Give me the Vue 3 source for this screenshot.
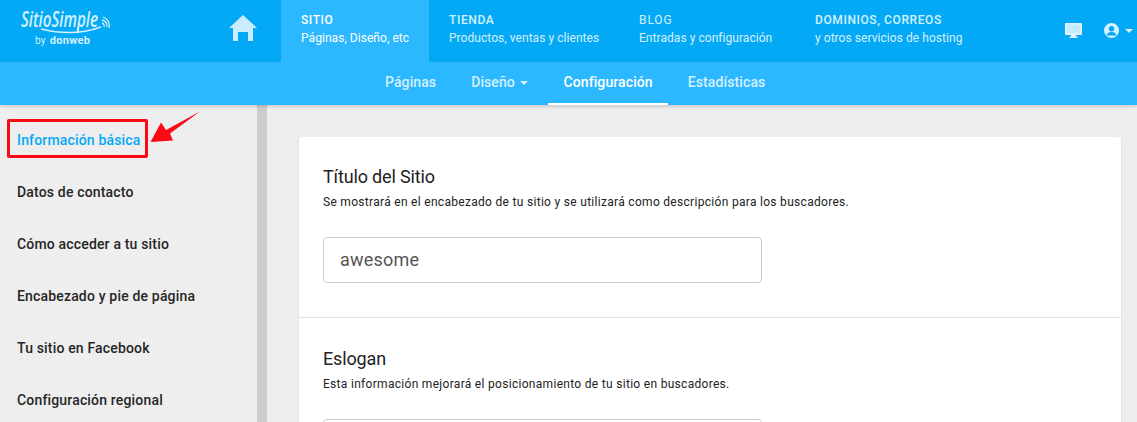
<script setup>
const tabs = [
  { title: 'SITIO', sub: 'Páginas, Diseño, etc', active: true, w: 148 },
  { title: 'TIENDA', sub: 'Productos, ventas y clientes', w: 190 },
  { title: 'BLOG', sub: 'Entradas y configuración', w: 176 },
  { title: 'DOMINIOS, CORREOS', sub: 'y otros servicios de hosting', w: 190 }
]
const side = ['Información básica', 'Datos de contacto', 'Cómo acceder a tu sitio', 'Encabezado y pie de página', 'Tu sitio en Facebook', 'Configuración regional']
</script>

<template>
  <div class="page">
    <header class="head">
      <div class="top">
        <div class="brand">
          <svg class="logo" width="100" height="30" viewBox="0 0 100 30">
            <text x="0" y="21" class="logo-name" textLength="77" lengthAdjust="spacingAndGlyphs">SitioSimple</text>
            <path d="M20 23 Q52 31 80 21" fill="none" stroke="#d5f0ff" stroke-width="1.6" />
            <path d="M57 21V27" fill="none" stroke="#d5f0ff" stroke-width="1.2" />
            <path d="M81 17a3 3 0 0 1 2 4M81 14a6 6 0 0 1 5 7M82 11a9 9 0 0 1 6 11" fill="none" stroke="#d5f0ff" stroke-width="1.3" />
          </svg>
          <div class="by">by <b>donweb</b></div>
        </div>
        <div class="home">
          <svg width="28" height="26" viewBox="0 0 28 26">
            <path d="M14 0 L28 13 H24 V26 H19 V17 H9 V26 H4 V13 H0 Z" fill="#c9ecff" />
          </svg>
        </div>
        <nav class="tabs">
          <div v-for="t in tabs" :key="t.title" class="tab" :class="{ on: t.active }" :style="{ width: t.w + 'px' }">
            <div class="tt">{{ t.title }}</div>
            <div class="ts">{{ t.sub }}</div>
          </div>
        </nav>
        <div class="tools">
          <svg width="17" height="15" viewBox="0 0 17 15">
            <path d="M1 0H16Q17 0 17 1V11Q17 12 16 12H11V13.5H12.5V15H4.500V13.500H6V12H1Q0 12 0 11V1Q0 0 1 0Z" fill="#e2f5ff" />
            <rect x="1.500" y="1.500" width="14" height="8.500" fill="#c4ebff" />
          </svg>
          <div class="user">
            <svg width="15" height="15" viewBox="0 0 15 15">
              <path fill-rule="evenodd" d="M7.500 0a7.500 7.500 0 1 0 0 15a7.500 7.500 0 1 0 0-15ZM7.500 3a2.700 2.700 0 1 1 0 5.400a2.700 2.700 0 1 1 0-5.400ZM3 11.500C3.500 9.800 5 9 7.500 9s4 .8 4.500 2.500L12 12.500H3Z" fill="#d5f0ff" />
            </svg>
            <i class="caret dim"></i>
          </div>
        </div>
      </div>
      <div class="sub">
        <a class="sl">Páginas</a>
        <a class="sl">Diseño <i class="caret gap"></i></a>
        <a class="sl on">Configuración</a>
        <a class="sl">Estadísticas</a>
      </div>
    </header>

    <div class="body">
      <aside class="side">
        <a v-for="(s, i) in side" :key="s" class="item" :class="{ cur: i === 0 }">{{ s }}</a>
        <div class="mark"></div>
        <svg class="arrow" width="54" height="40" viewBox="0 0 54 40">
          <path d="M50 1.500 L16 20 L11 12.500 L0.500 32 L23 30.500 L20 23.500 Z" fill="#fc0a14" />
        </svg>
      </aside>
      <div class="rail"></div>
      <main class="main">
        <section class="card">
          <div class="block">
            <h2>Título del Sitio</h2>
            <p>Se mostrará en el encabezado de tu sitio y se utilizará como descripción para los buscadores.</p>
            <div class="field">awesome</div>
          </div>
          <div class="block second">
            <h2>Eslogan</h2>
            <p>Esta información mejorará el posicionamiento de tu sitio en buscadores.</p>
            <div class="field"></div>
          </div>
        </section>
      </main>
    </div>
  </div>
</template>

<style>
html, body { margin: 0; height: 100%; overflow: hidden; }
</style>

<style scoped>
.page { width: 1137px; height: 422px; overflow: hidden; background: #eee; font-family: Roboto, "Liberation Sans", sans-serif; display: flex; flex-direction: column; }
.head { position: relative; z-index: 2; box-shadow: 0 1px 4px rgba(0,0,0,.2); }
.top { height: 62px; background: #04a9f6; display: flex; }
.brand { width: 229px; padding: 6px 0 0 21px; box-sizing: border-box; position: relative; }
.logo { display: block; overflow: visible; }
.logo-name { font-family: "Open Sans", sans-serif; font-style: italic; font-size: 21px; fill: #d5f0ff; font-weight: 600; }
.by { position: absolute; left: 35px; top: 35px; font-size: 10px; letter-spacing: .3px; color: #d5f0ff; line-height: 12px; white-space: nowrap; }
.by b { font-size: 11px; font-weight: 700; margin-left: 1px; }
.home { width: 52px; padding-top: 15px; box-sizing: border-box; }
.tabs { display: flex; }
.tab { padding: 12px 0 0 20px; box-sizing: border-box; color: #d5f0ff; height: 62px; }
.tab.on { background: #2cb8fe; color: #fff; }
.tt { font-size: 12px; font-weight: 500; letter-spacing: .6px; line-height: 16px; }
.ts { font-size: 12px; letter-spacing: .05px; line-height: 16px; margin-top: 2px; }
.tab:nth-child(3) .tt { font-weight: 400; letter-spacing: .9px; }
.tools { margin-left: auto; display: flex; align-items: flex-start; padding: 23px 4px 0 0; gap: 22px; }
.user { display: flex; align-items: center; gap: 6px; }
.caret { display: inline-block; width: 0; height: 0; border: 4px solid transparent; border-top-color: currentColor; border-bottom: 0; vertical-align: 2px; }
.caret.gap { margin-left: 2px; }
.dim { color: #d5f0ff; }
.sub { height: 43px; background: #2cb8fe; display: flex; gap: 5px; padding-left: 370px; box-sizing: border-box; }
.sl { padding: 0 15px; font-size: 14px; font-weight: 500; letter-spacing: .1px; line-height: 41px; color: #d5f0ff; box-sizing: border-box; height: 43px; }
.sl.on { color: #fff; border-bottom: 2px solid #fff; }
.body { flex: 1; display: flex; min-height: 0; }
.side { width: 257px; position: relative; padding-top: 9px; box-sizing: border-box; flex: none; }
.item { display: block; height: 52px; line-height: 52px; padding-left: 17px; font-size: 14px; font-weight: 500; letter-spacing: .17px; color: #262626; white-space: nowrap; }
.item.cur { color: #04a9f6; }
.mark { position: absolute; left: 7px; top: 14px; width: 141px; height: 39px; border: 3px solid #fc0a14; box-sizing: border-box; border-radius: 2px; }
.arrow { position: absolute; left: 150px; top: 5px; }
.rail { width: 10px; background: #ccc; flex: none; }
.main { flex: 1; padding: 32px 16px 0 32px; min-width: 0; }
.card { background: #fff; border-radius: 3px; box-shadow: 0 1px 2px rgba(0,0,0,.14); height: 400px; }
.block { padding: 28px 24px 34px; height: 180px; box-sizing: border-box; }
.second { border-top: 1px solid #e2e2e2; padding-top: 29px; }
h2 { margin: 0; font-size: 18px; font-weight: 400; line-height: 24px; color: #222; letter-spacing: -.15px; }
p { margin: 5px 0 0; font-size: 12px; line-height: 17px; letter-spacing: .3px; color: #222; }
.field { margin-top: 26px; width: 439px; height: 46px; border: 1px solid #ccc; border-radius: 4px; box-sizing: border-box; padding: 0 16px; font-size: 18px; line-height: 44px; letter-spacing: .2px; color: #555; }
</style>
